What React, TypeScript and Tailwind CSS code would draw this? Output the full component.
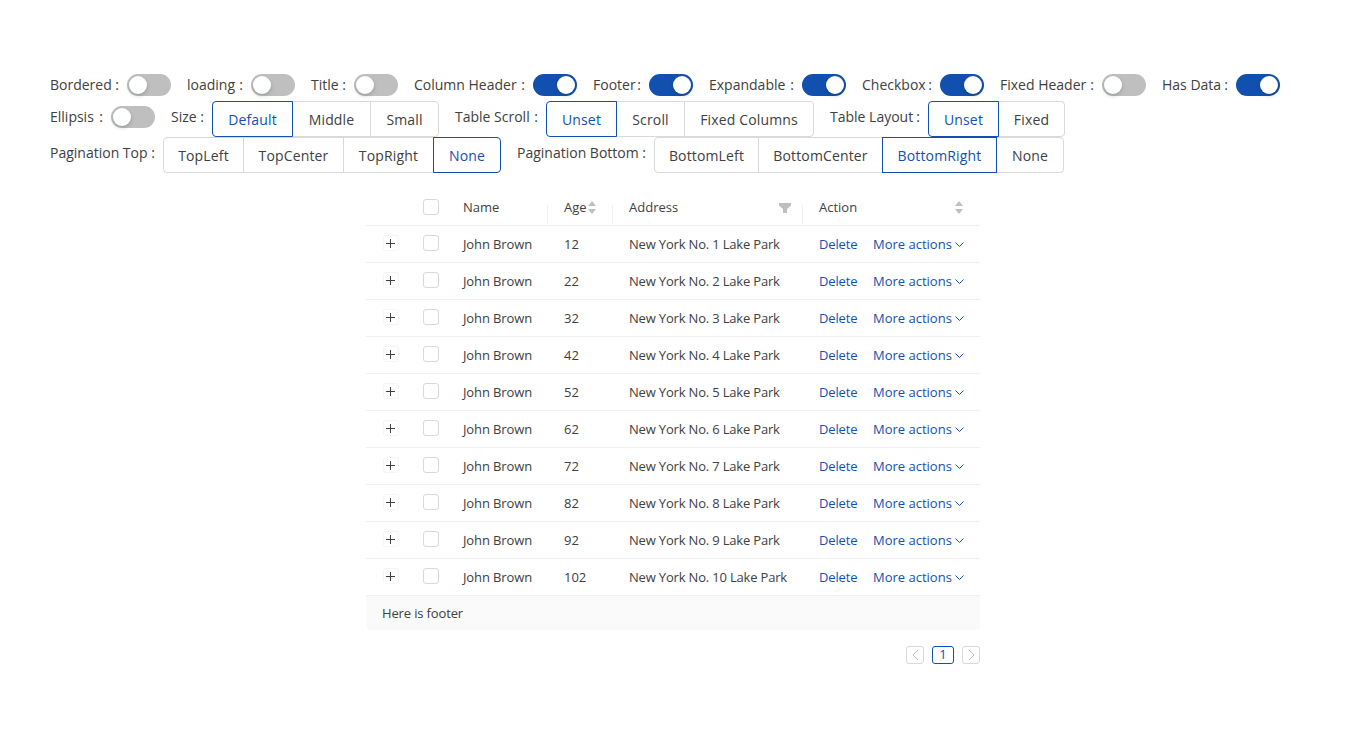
const PRIMARY_TEXT = "text-[#1250b0]";

// label box carries the gap to the control, colon sits at its right end
const Label = ({ text, w }: { text: string; w: string }) => (
  <span className={`flex h-8 -translate-y-px items-center justify-between whitespace-nowrap pr-2 ${w}`}>
    <span>{text}</span>
    <span>:</span>
  </span>
);

const Toggle = ({ label, w, on = false }: { label: string; w: string; on?: boolean }) => (
  <div className="mr-4 flex h-8 items-start">
    <Label text={label} w={w} />
    <span
      className={`mt-[5px] flex h-[22px] w-11 items-center rounded-full px-[2px] ${
        on ? "justify-end bg-[#1250b0]" : "justify-start bg-[#bfbfbf]"
      }`}
    >
      <span className="h-[18px] w-[18px] rounded-full bg-white shadow-[0_2px_4px_rgba(0,35,11,0.2)]" />
    </span>
  </div>
);

const Radios = ({
  label,
  w,
  options,
  active,
}: {
  label: string;
  w: string;
  options: [string, string][];
  active: string;
}) => (
  <div className="mr-4 flex h-9 items-start">
    <Label text={label} w={w} />
    <div className="flex h-9">
      {options.map(([opt, width], i) => (
        <span
          key={opt}
          className={`-ml-px flex h-9 items-center justify-center whitespace-nowrap border tracking-[0.15px] first:ml-0 ${width} ${
            opt === active ? `relative z-10 border-[#1250b0] ${PRIMARY_TEXT}` : "border-[#d9d9d9]"
          } ${i === 0 ? "rounded-l" : ""} ${i === options.length - 1 ? "rounded-r" : ""}`}
        >
          {opt}
        </span>
      ))}
    </div>
  </div>
);

const Check = () => <span className="block h-4 w-4 rounded-[3px] border border-[#d9d9d9] bg-white" />;

const Sorter = () => (
  <svg width="8" height="13" viewBox="0 0 8 13" className="shrink-0 fill-[#bfbfbf]">
    <path d="M4 0 8 5H0Z" />
    <path d="M0 8h8l-4 5Z" />
  </svg>
);

const Divider = () => <span className="absolute -left-px top-[7px] h-[19px] w-px bg-[#f0f0f0]" />;

const gridCols = "grid grid-cols-[49px_32px_101px_65px_190px_177px] items-center border-b border-[#f0f0f0]";

const rows = [1, 2, 3, 4, 5, 6, 7, 8, 9, 10];

export default function App() {
  return (
    <div className="min-h-screen bg-white pl-[50px] pt-[69px] text-[14px] text-[#404040] [font-family:'Open_Sans',sans-serif]">
      <div className="flex h-8">
        <Toggle label="Bordered" w="w-[77px]" />
        <Toggle label="loading" w="w-[64px]" />
        <Toggle label="Title" w="w-[43px]" />
        <Toggle label="Column Header" w="w-[119px]" on />
        <Toggle label="Footer" w="w-[56px]" on />
        <Toggle label="Expandable" w="w-[93px]" on />
        <Toggle label="Checkbox" w="w-[78px]" on />
        <Toggle label="Fixed Header" w="w-[102px]" />
        <Toggle label="Has Data" w="w-[74px]" on />
      </div>
      <div className="flex h-9">
        <Toggle label="Ellipsis" w="w-[61px]" />
        <Radios
          label="Size"
          w="w-[41px]"
          options={[
            ["Default", "w-[81px]"],
            ["Middle", "w-[79px]"],
            ["Small", "w-[69px]"],
          ]}
          active="Default"
        />
        <Radios
          label="Table Scroll"
          w="w-[91px]"
          options={[
            ["Unset", "w-[71px]"],
            ["Scroll", "w-[69px]"],
            ["Fixed Columns", "w-[130px]"],
          ]}
          active="Unset"
        />
        <Radios
          label="Table Layout"
          w="w-[98px]"
          options={[
            ["Unset", "w-[71px]"],
            ["Fixed", "w-[67px]"],
          ]}
          active="Unset"
        />
      </div>
      <div className="flex h-9">
        <Radios
          label="Pagination Top"
          w="w-[113px]"
          options={[
            ["TopLeft", "w-[81px]"],
            ["TopCenter", "w-[101px]"],
            ["TopRight", "w-[91px]"],
            ["None", "w-[68px]"],
          ]}
          active="None"
        />
        <Radios
          label="Pagination Bottom"
          w="w-[137px]"
          options={[
            ["BottomLeft", "w-[105px]"],
            ["BottomCenter", "w-[125px]"],
            ["BottomRight", "w-[115px]"],
            ["None", "w-[68px]"],
          ]}
          active="BottomRight"
        />
      </div>

      <div className="-ml-[50px] mt-[17px] flex justify-center">
        <div className="w-[614px] text-[13px]">
          <div className={`${gridCols} h-9`}>
            <span />
            <span className="-mt-[2px] pl-2">
              <Check />
            </span>
            <span className="pl-4">Name</span>
            <span className="relative flex items-center pl-4">
              <Divider />
              Age
              <span className="ml-px">
                <Sorter />
              </span>
            </span>
            <span className="relative flex items-center justify-between pl-4 pr-[12px]">
              <Divider />
              Address
              <svg width="12" height="10" viewBox="0 0 12 10" className="fill-[#bfbfbf]">
                <path d="M0 0h12v2.5L8 6v4H4V6L0 2.5Z" />
              </svg>
            </span>
            <span className="relative flex items-center justify-between pl-4 pr-[17px]">
              <Divider />
              Action
              <Sorter />
            </span>
          </div>

          {rows.map((n) => (
            <div key={n} className={`${gridCols} h-[37px]`}>
              <span className="-mt-[2px] flex justify-center">
                <span className="flex h-4 w-4 items-center justify-center rounded-[3px] border border-[#f5f5f5]">
                  <svg width="9" height="9" viewBox="0 0 9 9" className="stroke-[#404040]">
                    <path d="M4.5 0v9M0 4.5h9" fill="none" />
                  </svg>
                </span>
              </span>
              <span className="-mt-[2px] pl-2">
                <Check />
              </span>
              <span className="pl-4 pt-px tracking-[-0.12px]">John Brown</span>
              <span className="pl-4 pt-px">{n * 10 + 2}</span>
              <span className="whitespace-nowrap pl-4 pt-px tracking-[-0.18px]">New York No. {n} Lake Park</span>
              <span className={`flex items-center whitespace-nowrap pl-4 pt-px ${PRIMARY_TEXT}`}>
                <span className="w-[38px] tracking-[-0.15px]">Delete</span>
                <span className="ml-4 w-[78px]">More actions</span>
                <svg width="9" height="6" viewBox="0 0 9 6" className="ml-1 stroke-[#1250b0]">
                  <path d="M0.5 0.5 4.5 4.5l4-4" fill="none" />
                </svg>
              </span>
            </div>
          ))}

          <div className="flex h-[34px] items-center rounded-b bg-[#fafafa] px-4 pt-px tracking-[-0.14px]">
            Here is footer
          </div>

          <div className="mt-4 flex h-[18px] justify-end gap-2">
            <span className="flex w-[18px] items-center justify-center rounded-[3px] border border-[#d9d9d9]">
              <svg width="7" height="12" viewBox="0 0 7 12" className="stroke-[#bfbfbf]">
                <path d="M6 1 1 6l5 5" fill="none" />
              </svg>
            </span>
            <span className={`flex w-[22px] items-center justify-center rounded-[3px] border border-[#1250b0] ${PRIMARY_TEXT}`}>
              1
            </span>
            <span className="flex w-[18px] items-center justify-center rounded-[3px] border border-[#d9d9d9]">
              <svg width="7" height="12" viewBox="0 0 7 12" className="stroke-[#bfbfbf]">
                <path d="M1 1l5 5-5 5" fill="none" />
              </svg>
            </span>
          </div>
        </div>
      </div>
    </div>
  );
}
